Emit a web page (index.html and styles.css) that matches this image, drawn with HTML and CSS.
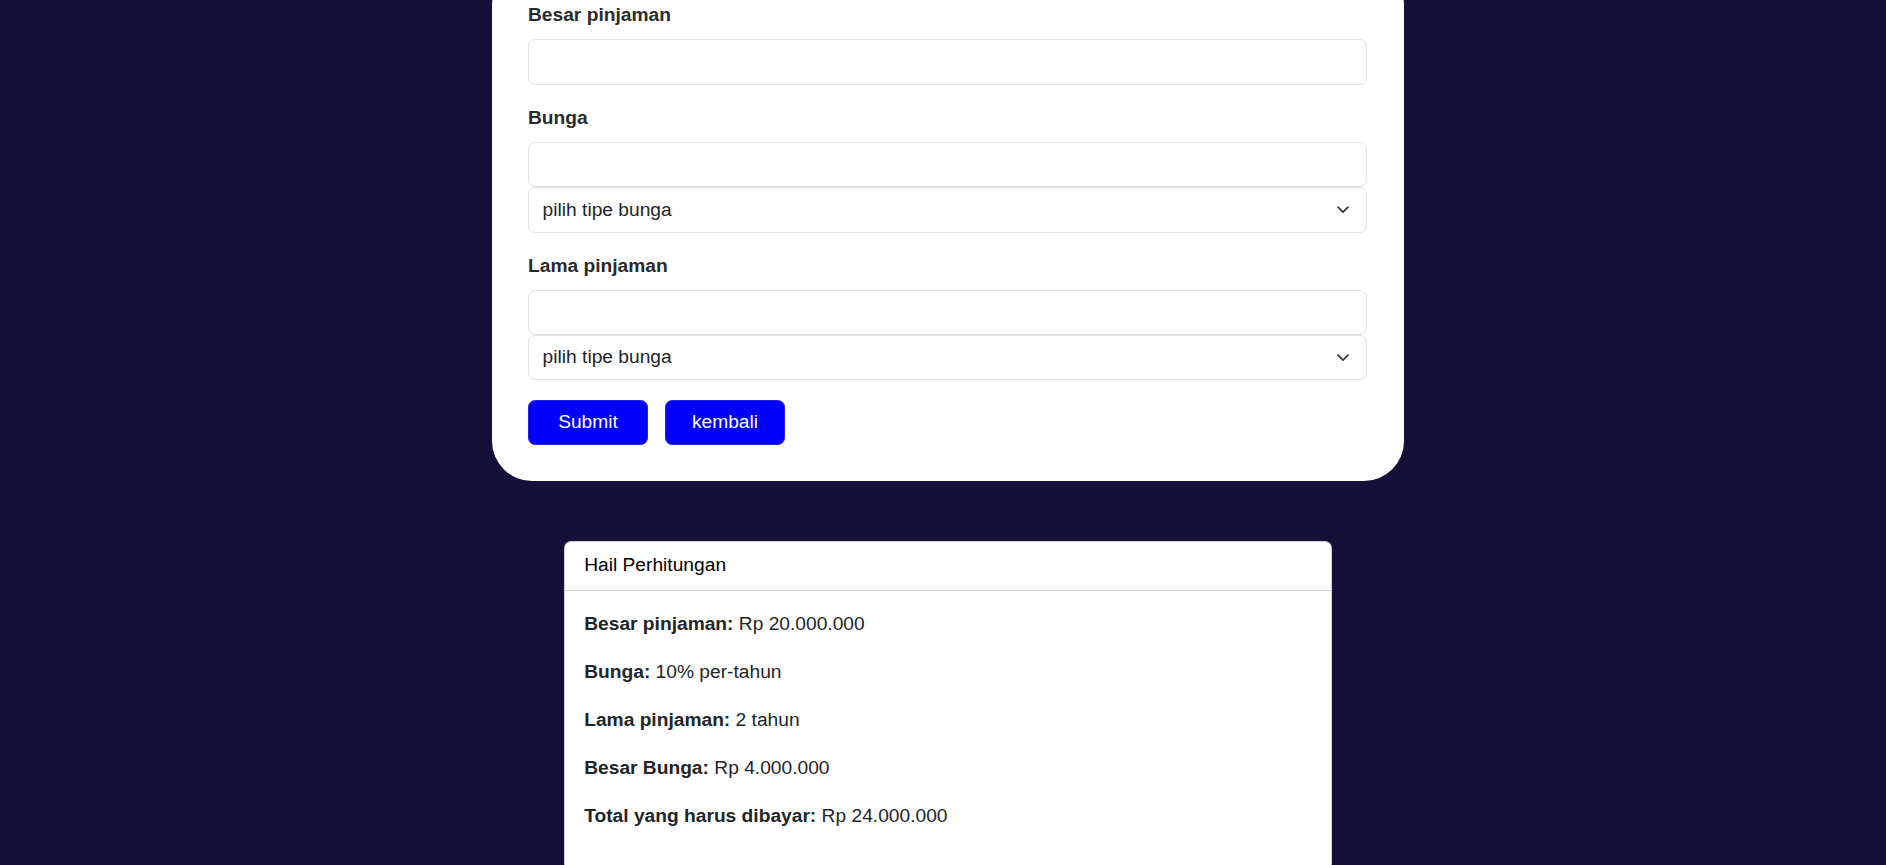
FILE: index.html
```html
<!DOCTYPE html>
<html lang="id">
<head>
<meta charset="utf-8">
<title>Kalkulator Pinjaman</title>
<link rel="stylesheet" href="styles.css">
</head>
<body>
<main class="page">
  <form class="form-card">
    <div class="group">
      <label class="label" for="besar">Besar pinjaman</label>
      <input class="control" id="besar" type="text">
    </div>
    <div class="group">
      <label class="label" for="bunga">Bunga</label>
      <input class="control joined-top" id="bunga" type="text">
      <div class="select-wrap">
        <select class="control select joined-bottom">
          <option>pilih tipe bunga</option>
        </select>
        <svg class="chevron" width="12" height="8" viewBox="0 0 12 8"><path d="M1 1.2 6 6.2 11 1.2" fill="none" stroke="#343a40" stroke-width="1.7" stroke-linecap="round" stroke-linejoin="round"/></svg>
      </div>
    </div>
    <div class="group">
      <label class="label" for="lama">Lama pinjaman</label>
      <input class="control joined-top" id="lama" type="text">
      <div class="select-wrap">
        <select class="control select joined-bottom">
          <option>pilih tipe bunga</option>
        </select>
        <svg class="chevron" width="12" height="8" viewBox="0 0 12 8"><path d="M1 1.2 6 6.2 11 1.2" fill="none" stroke="#343a40" stroke-width="1.7" stroke-linecap="round" stroke-linejoin="round"/></svg>
      </div>
    </div>
    <div class="actions">
      <button class="btn" type="button">Submit</button>
      <button class="btn" type="button">kembali</button>
    </div>
  </form>

  <section class="result-card">
    <div class="result-header">Hail Perhitungan</div>
    <div class="result-body">
      <p><b>Besar pinjaman:</b> Rp 20.000.000</p>
      <p><b>Bunga:</b> 10% per-tahun</p>
      <p><b>Lama pinjaman:</b> 2 tahun</p>
      <p><b>Besar Bunga:</b> Rp 4.000.000</p>
      <p><b>Total yang harus dibayar:</b> Rp 24.000.000</p>
    </div>
  </section>
</main>
</body>
</html>
```

FILE: styles.css
```css
* { box-sizing: border-box; }

html, body {
  margin: 0;
  background: #14103a;
  height: 100%;
  overflow: hidden;
}

body {
  font-family: "Liberation Sans", Arial, sans-serif;
  font-size: 19.2px;
  line-height: 28.8px;
  color: #212529;
}

.page {
  display: flex;
  flex-direction: column;
  align-items: center;
  padding-left: 10px;
}

.form-card {
  width: 912px;
  margin-top: -35px;
  background: #fff;
  border-radius: 40px;
  padding: 36px 37px 36px 36px;
}

.group {
  margin-bottom: 19.2px;
}

.label {
  display: block;
  font-weight: bold;
  margin-bottom: 9.6px;
  color: #2a2a2a;
}

.control {
  display: block;
  width: 100%;
  height: 45.2px;
  padding: 7.2px 14.4px;
  font-family: inherit;
  font-size: 19.2px;
  line-height: 28.8px;
  color: #212529;
  background: #fff;
  border: 1px solid #dee2e6;
  border-radius: 7.2px;
  outline: none;
}

.select-wrap {
  position: relative;
}

.select {
  appearance: none;
  -webkit-appearance: none;
  padding-left: 13.6px;
  padding-right: 50px;
}

.chevron {
  position: absolute;
  right: 18px;
  top: 19px;
  pointer-events: none;
}

.actions {
  display: flex;
  gap: 17px;
}

.btn {
  width: 120px;
  height: 45px;
  padding: 7.2px 14.4px;
  font-family: inherit;
  font-size: 19.2px;
  line-height: 28.8px;
  color: #fff;
  background: #0000ff;
  border: 1px solid #2323d8;
  border-radius: 7.2px;
}

.result-card {
  width: 768px;
  margin-top: 60px;
  background: #fff;
  border: 1px solid rgba(0, 0, 0, 0.175);
  border-radius: 7.2px;
}

.result-header {
  padding: 9.6px 19.2px;
  color: #000;
  border-bottom: 1px solid rgba(0, 0, 0, 0.175);
}

.result-body {
  padding: 19.2px;
}

.result-body p {
  margin: 0 0 19.2px;
}

.result-body b {
  font-weight: bold;
}
```
